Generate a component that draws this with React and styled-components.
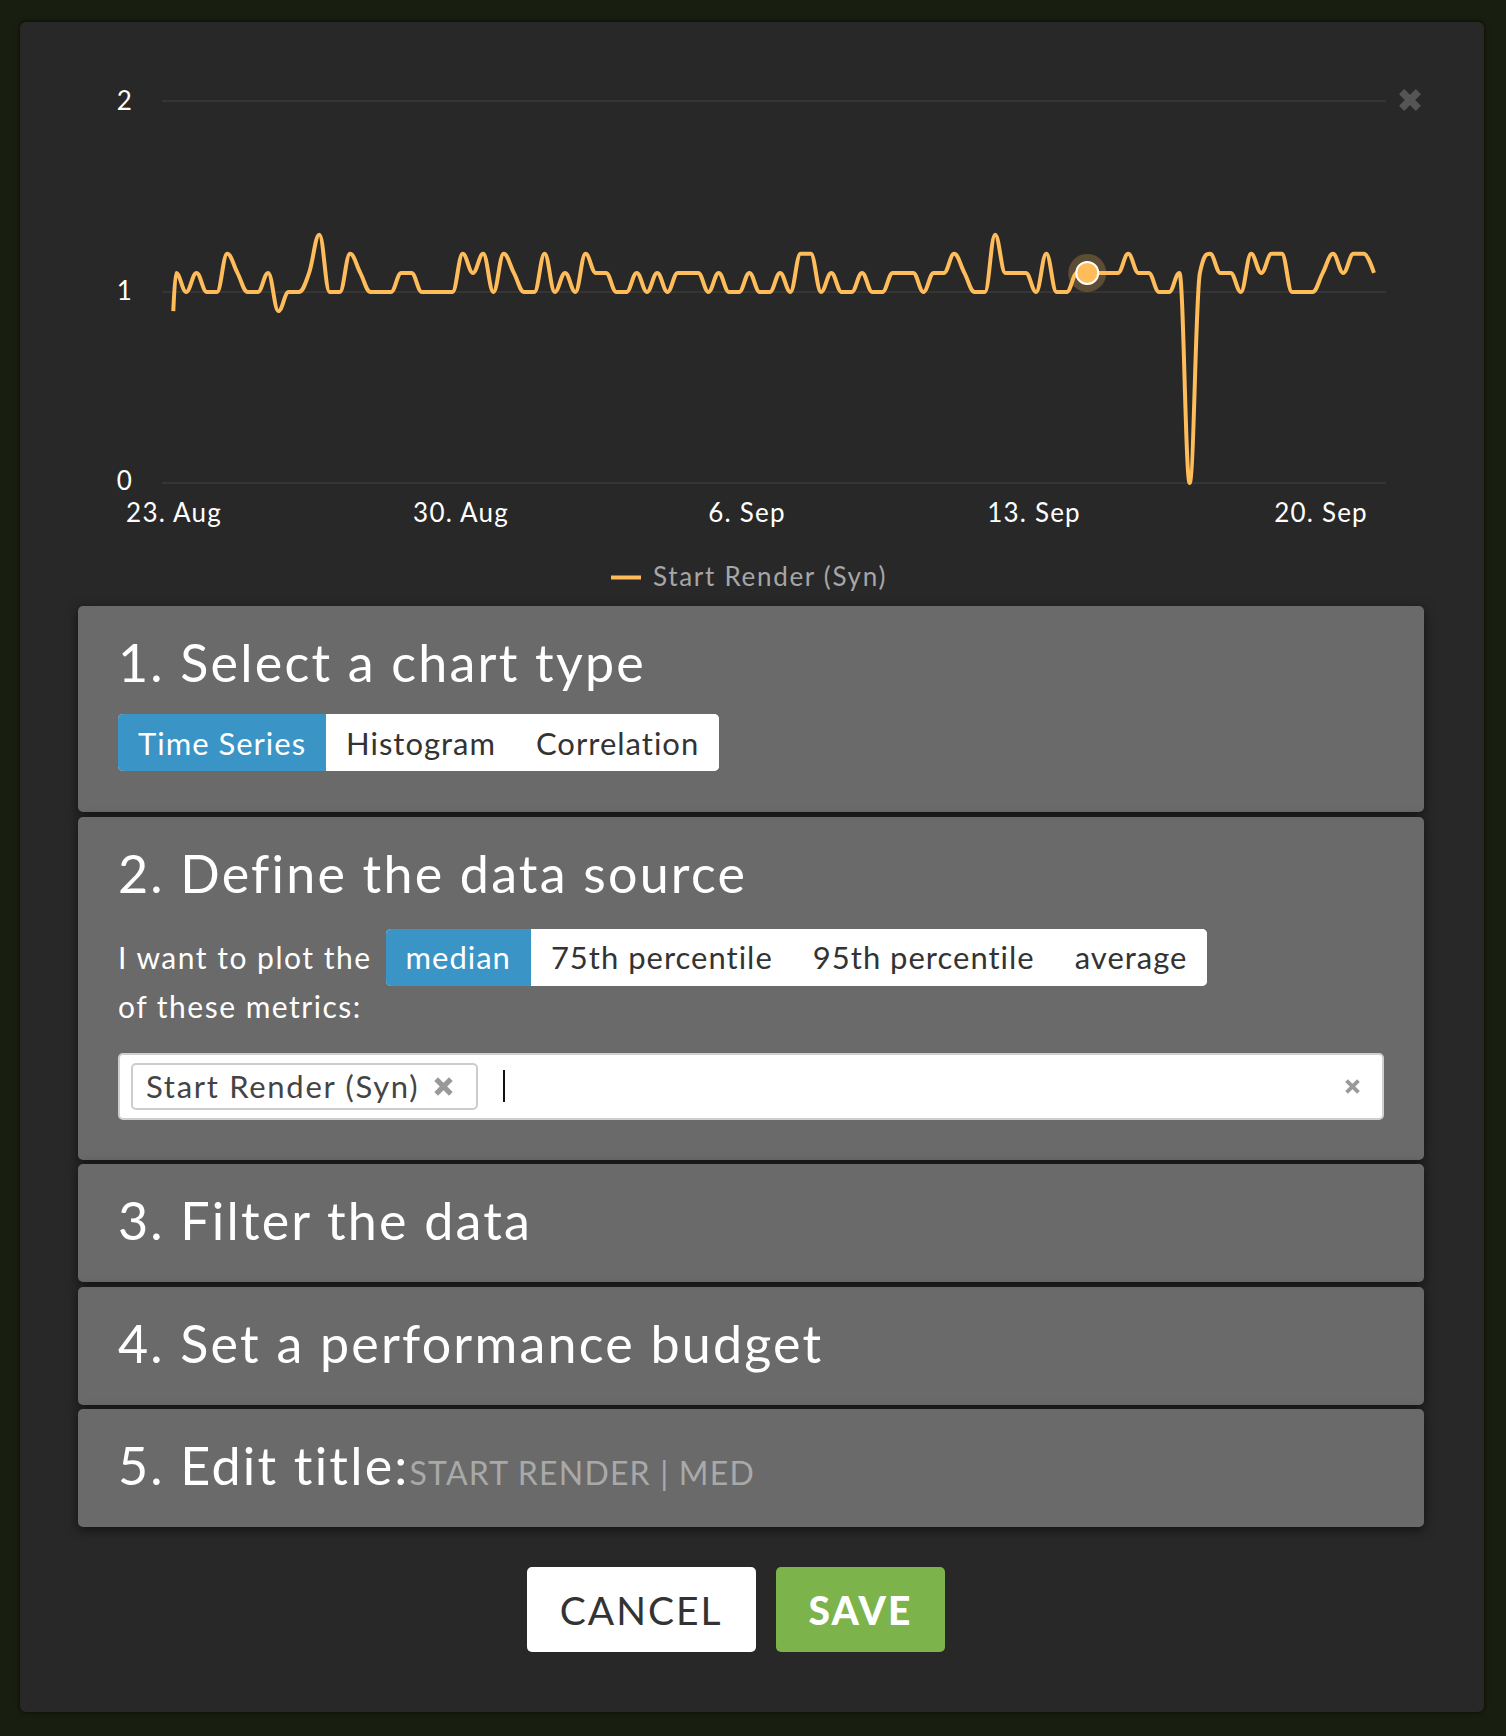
import React from "react";
import styled, { createGlobalStyle } from "styled-components";

const GlobalStyle = createGlobalStyle`
  html, body { margin: 0; padding: 0; background: #191f10; }
  body { font-family: Lato, "Open Sans", sans-serif; }
  * { box-sizing: border-box; }
`;

const Page = styled.div`
  padding: 22px 22px 24px 20px;
  width: 1506px;
  min-height: 1736px;
`;

const Modal = styled.div`
  position: relative;
  width: 1464px;
  background: #282828;
  border-radius: 6px;
  box-shadow: 0 0 4px 1px rgba(0, 0, 0, 0.55);
  display: flex;
  flex-direction: column;
`;

const ChartArea = styled.div`
  height: 584px;
  svg { display: block; }
`;

const CloseButton = styled.button`
  position: absolute;
  left: 1378px;
  top: 65px;
  width: 24px;
  height: 25px;
  padding: 0;
  border: 0;
  background: transparent;
  display: flex;
  align-items: center;
  justify-content: center;
  cursor: pointer;
`;

const Panels = styled.div`
  display: flex;
  flex-direction: column;
  gap: 4.6px;
  margin: 0 60px 0 58px;
`;

const Panel = styled.section`
  background: #6a6a6a;
  border-radius: 5px;
  box-shadow: 0 3px 12px rgba(0, 0, 0, 0.55);
  padding: 30px 40px ${(p) => (p.$bottom || "36px")};
  display: flex;
  flex-direction: column;
  align-items: flex-start;
`;

const Title = styled.h2`
  margin: 0;
  font-family: Lato, sans-serif;
  font-weight: 400;
  font-size: 52px;
  line-height: 52px;
  color: #ffffff;
  letter-spacing: 2.2px;
  white-space: nowrap;
`;

const TitleNote = styled.span`
  font-size: 32px;
  line-height: 1;
  letter-spacing: 1.2px;
  text-transform: uppercase;
  color: #a9a9a9;
`;

const Segmented = styled.div`
  display: inline-flex;
  height: 57px;
  background: #ffffff;
  border-radius: 5px;
  overflow: hidden;
  margin-top: ${(p) => p.$mt || "0px"};
`;

const Segment = styled.button`
  border: 0;
  margin: 0;
  padding: 0 20px;
  height: 100%;
  font-family: Lato, sans-serif;
  font-size: 31px;
  letter-spacing: 1px;
  color: ${(p) => (p.$active ? "#ffffff" : "#333333")};
  background: ${(p) => (p.$active ? "#3b94c6" : "#ffffff")};
  cursor: pointer;
  white-space: nowrap;
`;

const PlotRow = styled.div`
  display: flex;
  align-items: center;
  gap: 14px;
  margin-top: 30px;
`;

const BodyText = styled.div`
  font-size: 30px;
  line-height: 40px;
  letter-spacing: 1.5px;
  color: #ffffff;
  white-space: nowrap;
`;

const MetricsInput = styled.div`
  margin-top: 27px;
  align-self: stretch;
  height: 67px;
  background: #ffffff;
  border: 2px solid #cfcfcf;
  border-radius: 5px;
  display: flex;
  align-items: center;
  padding: 0 21px 0 11px;
`;

const Tag = styled.div`
  height: 47px;
  display: flex;
  align-items: center;
  gap: 14px;
  padding: 0 22px 0 13px;
  border: 2px solid #cccccc;
  border-radius: 5px;
  font-size: 31px;
  letter-spacing: 1.7px;
  color: #444444;
  white-space: nowrap;
`;

const Caret = styled.span`
  width: 2px;
  height: 32px;
  margin-left: 25px;
  background: #111111;
`;

const Spacer = styled.div`
  flex: 1;
`;

const Footer = styled.div`
  display: flex;
  justify-content: center;
  gap: 20px;
  padding: 40px 32px 60px 0;
`;

const ActionButton = styled.button`
  height: 85px;
  padding: 0 33px;
  border: 0;
  border-radius: 5px;
  font-family: Lato, sans-serif;
  font-size: 39px;
  letter-spacing: 2px;
  font-weight: ${(p) => (p.$primary ? 900 : 400)};
  color: ${(p) => (p.$primary ? "#ffffff" : "#333333")};
  background: ${(p) => (p.$primary ? "#7cb34a" : "#ffffff")};
  cursor: pointer;
`;

const XIcon = ({ size = 20, color = "#999", weight = 5 }) => (
  <svg width={size} height={size} viewBox="0 0 20 20">
    <path
      d="M3 3 L17 17 M17 3 L3 17"
      stroke={color}
      strokeWidth={weight}
      strokeLinecap="butt"
      fill="none"
    />
  </svg>
);

const VALUES = [
  1.1, 1.0, 1.1, 1.0, 1.0, 1.2, 1.1, 1.0, 1.0, 1.1,
  0.9, 1.0, 1.0, 1.1, 1.3, 1.0, 1.0, 1.2, 1.1, 1.0,
  1.0, 1.0, 1.1, 1.1, 1.0, 1.0, 1.0, 1.0, 1.2, 1.1,
  1.2, 1.0, 1.2, 1.1, 1.0, 1.0, 1.2, 1.0, 1.1, 1.0,
  1.2, 1.1, 1.1, 1.0, 1.0, 1.1, 1.0, 1.1, 1.0, 1.1,
  1.1, 1.1, 1.0, 1.1, 1.0, 1.0, 1.1, 1.0, 1.0, 1.1,
  1.0, 1.2, 1.2, 1.0, 1.1, 1.0, 1.0, 1.1, 1.0, 1.0,
  1.1, 1.1, 1.1, 1.0, 1.1, 1.1, 1.2, 1.1, 1.0, 1.0,
  1.3, 1.1, 1.1, 1.1, 1.0, 1.2, 1.0, 1.0, 1.1, 1.1,
  1.1, 1.1, 1.1, 1.2, 1.1, 1.1, 1.0, 1.0, 1.1, 0.0,
  1.1, 1.2, 1.1, 1.1, 1.0, 1.2, 1.1, 1.2, 1.2, 1.0,
  1.0, 1.0, 1.1, 1.2, 1.1, 1.2, 1.2, 1.1,
];

const yOf = (v) => 461 - v * 191;
const STEP = 10.239;
const X0 = 156;

function buildPoints() {
  const pts = [[153.3, yOf(0.9)]];
  VALUES.forEach((v, i) => pts.push([X0 + i * STEP, yOf(v)]));
  return pts;
}

function splinePath(pts) {
  const sm = 1.5;
  const den = sm + 1;
  let d = `M${pts[0][0].toFixed(2)},${pts[0][1].toFixed(2)}`;
  const rc = [];
  for (let i = 1; i < pts.length; i++) {
    const [x, y] = pts[i];
    const [lx, ly] = pts[i - 1];
    let lcx = x;
    let lcy = y;
    if (i < pts.length - 1) {
      const [nx, ny] = pts[i + 1];
      lcx = (sm * x + lx) / den;
      lcy = (sm * y + ly) / den;
      const rcx = (sm * x + nx) / den;
      let rcy = (sm * y + ny) / den;
      let corr = 0;
      if (rcx !== lcx) corr = ((rcy - lcy) * (rcx - x)) / (rcx - lcx) + y - rcy;
      lcy += corr;
      rcy += corr;
      if (lcy > ly && lcy > y) {
        lcy = Math.max(ly, y);
        rcy = 2 * y - lcy;
      } else if (lcy < ly && lcy < y) {
        lcy = Math.min(ly, y);
        rcy = 2 * y - lcy;
      }
      if (rcy > ny && rcy > y) {
        rcy = Math.max(ny, y);
        lcy = 2 * y - rcy;
      } else if (rcy < ny && rcy < y) {
        rcy = Math.min(ny, y);
        lcy = 2 * y - rcy;
      }
      rc[i] = [rcx, rcy];
    }
    const p = rc[i - 1] || pts[i - 1];
    d += ` C${p[0].toFixed(2)},${p[1].toFixed(2)} ${lcx.toFixed(2)},${lcy.toFixed(2)} ${x.toFixed(2)},${y.toFixed(2)}`;
  }
  return d;
}

const X_LABELS = [
  { x: 154, t: "23. Aug" },
  { x: 441, t: "30. Aug" },
  { x: 727, t: "6. Sep" },
  { x: 1014, t: "13. Sep" },
  { x: 1301, t: "20. Sep" },
];

const Y_LABELS = [
  { y: 79, t: "2" },
  { y: 269, t: "1" },
  { y: 459, t: "0" },
];

function Chart() {
  const pts = buildPoints();
  const d = splinePath(pts);
  const marker = pts[90];
  return (
    <svg width="1464" height="584" viewBox="0 0 1464 584">
      {[79, 270, 461].map((y) => (
        <line key={y} x1="142" x2="1366" y1={y} y2={y} stroke="#353535" strokeWidth="2" />
      ))}
      <g fontFamily="Lato, sans-serif" fontSize="26" fill="#ffffff" letterSpacing="1.2">
        {Y_LABELS.map((l) => (
          <text key={l.t} x="113" y={l.y + 9} textAnchor="end">
            {l.t}
          </text>
        ))}
        {X_LABELS.map((l) => (
          <text key={l.t} x={l.x} y="500" textAnchor="middle">
            {l.t}
          </text>
        ))}
      </g>
      <path d={d} fill="none" stroke="#ffbc5a" strokeWidth="4" strokeLinejoin="round" />
      <circle cx={marker[0]} cy={marker[1]} r="19" fill="rgba(255,188,90,0.25)" />
      <circle cx={marker[0]} cy={marker[1]} r="11" fill="#ffbc5a" stroke="#ffffff" strokeWidth="2" />
      <line x1="591" x2="621" y1="555.5" y2="555.5" stroke="#ffbc5a" strokeWidth="4" />
      <text x="633" y="564" fontFamily="Lato, sans-serif" fontSize="26" letterSpacing="1.7" fill="#a6a6a6">
        Start Render (Syn)
      </text>
    </svg>
  );
}

export default function App() {
  return (
    <Page>
      <GlobalStyle />
      <Modal>
        <ChartArea>
          <Chart />
        </ChartArea>
        <CloseButton aria-label="close">
          <XIcon size={24} color="#555555" weight={6} />
        </CloseButton>
        <Panels>
          <Panel $bottom="41px">
            <Title>1. Select a chart type</Title>
            <Segmented $mt="26px">
              <Segment $active>Time Series</Segment>
              <Segment>Histogram</Segment>
              <Segment>Correlation</Segment>
            </Segmented>
          </Panel>
          <Panel $bottom="40px">
            <Title>2. Define the data source</Title>
            <PlotRow>
              <BodyText>I want to plot the</BodyText>
              <Segmented>
                <Segment $active>median</Segment>
                <Segment>75th percentile</Segment>
                <Segment>95th percentile</Segment>
                <Segment>average</Segment>
              </Segmented>
            </PlotRow>
            <BodyText>of these metrics:</BodyText>
            <MetricsInput>
              <Tag>
                Start Render (Syn)
                <XIcon size={21} color="#999999" weight={5} />
              </Tag>
              <Caret />
              <Spacer />
              <XIcon size={17} color="#9a9a9a" weight={4.5} />
            </MetricsInput>
          </Panel>
          <Panel>
            <Title>3. Filter the data</Title>
          </Panel>
          <Panel>
            <Title>4. Set a performance budget</Title>
          </Panel>
          <Panel>
            <Title>
              5. Edit title:<TitleNote>Start Render | Med</TitleNote>
            </Title>
          </Panel>
        </Panels>
        <Footer>
          <ActionButton>CANCEL</ActionButton>
          <ActionButton $primary>SAVE</ActionButton>
        </Footer>
      </Modal>
    </Page>
  );
}
